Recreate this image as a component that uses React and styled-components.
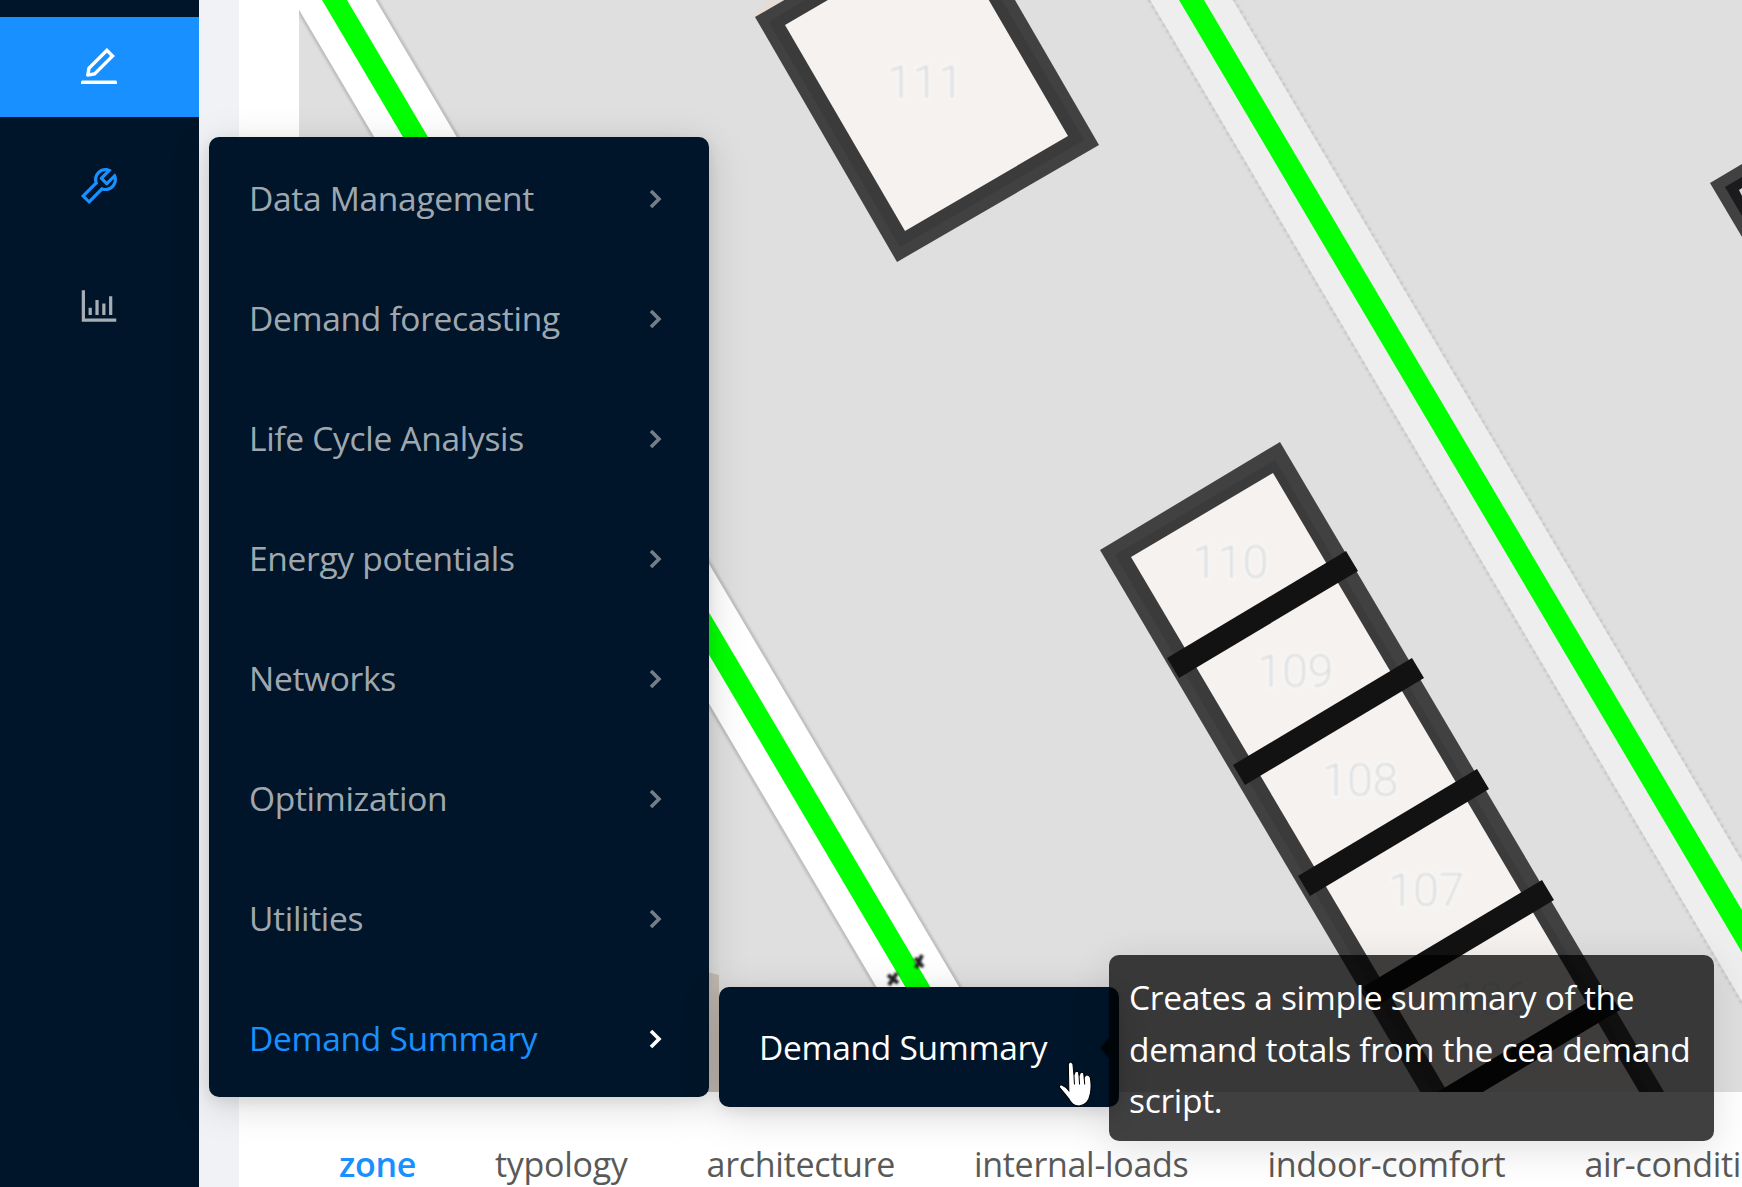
import styled, { createGlobalStyle } from "styled-components";
import { AiOutlineEdit, AiOutlineTool, AiOutlineBarChart } from "react-icons/ai";

const GlobalStyle = createGlobalStyle`
  html, body {
    margin: 0;
    padding: 0;
    height: 100%;
    overflow: hidden;
    background: #f0f2f5;
    font-family: "Open Sans", "Noto Sans", sans-serif;
  }
  #root { height: 100%; }
`;

const Page = styled.div`
  position: relative;
  display: flex;
  height: 100vh;
  overflow: hidden;
`;

const Sidebar = styled.nav`
  flex: 0 0 199px;
  padding-top: 17px;
  background: #001529;
`;

const NavItem = styled.div`
  display: flex;
  align-items: center;
  justify-content: center;
  height: 100px;
  padding: 0 2px 3px 0;
  box-sizing: border-box;
  margin-bottom: 20px;
  background: ${(p) => (p.$active ? "#1890ff" : "transparent")};
  color: ${(p) => p.$color};
`;

const Content = styled.main`
  flex: 1;
  min-width: 0;
  padding-left: 40px;
  background: #f0f2f5;
`;

const Panel = styled.section`
  height: 100%;
  padding-left: 60px;
  background: #fff;
`;

const MapFrame = styled.svg`
  display: block;
  width: 100%;
  height: 1092px;
  background: #dfdfdf;
`;

const Tabs = styled.div`
  display: flex;
  gap: 79px;
  padding: 48px 0 0 40px;
  overflow: hidden;
  white-space: nowrap;
`;

const Tab = styled.span`
  font-size: 34px;
  line-height: 48px;
  letter-spacing: -0.3px;
  font-weight: ${(p) => (p.$active ? 600 : 400)};
  color: ${(p) => (p.$active ? "#1890ff" : "#595959")};
`;

const Flyout = styled.ul`
  position: absolute;
  left: 209px;
  top: 137px;
  display: flex;
  flex-direction: column;
  gap: 8px;
  width: 500px;
  margin: 0;
  padding: 4px 0;
  box-sizing: border-box;
  list-style: none;
  background: #001529;
  border-radius: 10px;
  box-shadow: 0 8px 40px rgba(0, 0, 0, 0.15), 0 4px 14px rgba(0, 0, 0, 0.08);
`;

const FlyoutItem = styled.li`
  display: flex;
  align-items: center;
  justify-content: space-between;
  height: 112px;
  padding: 1px 47px 0 40px;
  box-sizing: border-box;
  font-size: 33.5px;
  letter-spacing: -0.3px;
  color: ${(p) => (p.$active ? "#1890ff" : "rgba(255, 255, 255, 0.65)")};
`;

const Chevron = styled.svg`
  flex: none;
  width: 14px;
  height: 20px;
  margin-top: 2px;
  fill: none;
  stroke: ${(p) => (p.$active ? "#fff" : "rgba(255, 255, 255, 0.45)")};
  stroke-width: 3.6;
`;

const SubMenu = styled.div`
  position: absolute;
  left: 719px;
  top: 987px;
  display: flex;
  align-items: center;
  width: 400px;
  height: 120px;
  padding-left: 40px;
  box-sizing: border-box;
  background: #001529;
  border-radius: 10px;
  color: #fff;
  font-size: 33.5px;
  letter-spacing: -0.3px;
  box-shadow: 0 8px 40px rgba(0, 0, 0, 0.15), 0 4px 14px rgba(0, 0, 0, 0.08);
`;

const Tooltip = styled.div`
  position: absolute;
  left: 1109px;
  top: 955px;
  width: 605px;
  height: 186px;
  padding: 17px 20px;
  box-sizing: border-box;
  background: rgba(0, 0, 0, 0.75);
  border-radius: 10px;
  color: #fff;
  font-size: 33.5px;
  line-height: 51.5px;
  letter-spacing: -0.3px;
  box-shadow: 0 8px 40px rgba(0, 0, 0, 0.12);

  &::before {
    content: "";
    position: absolute;
    left: -9px;
    top: 83px;
    width: 9px;
    height: 20px;
    background: rgba(0, 0, 0, 0.75);
    clip-path: polygon(100% 0, 100% 100%, 0 50%);
  }
`;

const Pointer = styled.svg`
  position: absolute;
  left: 1058px;
  top: 1060px;
  width: 36px;
  height: 47px;
`;

const Casing = styled.line`
  stroke: ${(p) => p.$color};
  stroke-width: ${(p) => p.$width}px;
`;

const Block = styled.polygon`
  fill: ${(p) => p.$fill};
`;

const Label = styled.text`
  font-family: Roboto, "DejaVu Sans", sans-serif;
  font-size: 46px;
  font-weight: 300;
  text-anchor: middle;
  fill: #dcdcdc;
  stroke: #f9f9f9;
  stroke-width: 4px;
  paint-order: stroke;
`;

const menuItems = [
  "Data Management",
  "Demand forecasting",
  "Life Cycle Analysis",
  "Energy potentials",
  "Networks",
  "Optimization",
  "Utilities",
  "Demand Summary",
];

const tabs = ["zone", "typology", "architecture", "internal-loads", "indoor-comfort", "air-conditioning"];

const labels = [
  ["111", 925, 98],
  ["110", 1230, 578],
  ["109", 1295, 687],
  ["108", 1360, 796],
  ["107", 1426, 906],
  ["106", 1491, 1015],
];

// dividers between the row houses, given by their upper-left corner
const dividers = [
  [1167, 658],
  [1233, 765],
  [1298, 876],
  [1363, 987],
  [1429, 1097],
];

const SLOPE = 0.591;

function Road({ x0, casing, edge, dashed }) {
  const y0 = -200;
  const y1 = 1200;
  const ax = x0 + SLOPE * y0;
  const bx = x0 + SLOPE * y1;
  return (
    <g>
      <Casing x1={ax} y1={y0} x2={bx} y2={y1} $color={edge} $width={76} strokeDasharray={dashed ? "4 3" : undefined} filter="url(#soft)" />
      <Casing x1={ax} y1={y0} x2={bx} y2={y1} $color={casing} $width={71} />
      <Casing x1={ax} y1={y0} x2={bx} y2={y1} $color="#00ff00" $width={21.5} />
    </g>
  );
}

function CityMap() {
  return (
    <MapFrame viewBox="299 0 1443 1092" preserveAspectRatio="xMinYMin slice">
      <defs>
        <filter id="soft" filterUnits="userSpaceOnUse" x="299" y="-200" width="1443" height="1400">
          <feGaussianBlur stdDeviation="0.8" />
        </filter>
      </defs>

      <Road x0={334.5} casing="#fff" edge="#bdbdbd" />
      <Road x0={1191.5} casing="#eeeeee" edge="#c4c4c4" dashed />

      <Block $fill="#c9bfb8" points="700,970 719,975 719,1092 700,1092" />
      <Block $fill="#e6dcd4" points="748,20 768,0 800,0" />

      {/* marks on the road */}
      <path d="M888 975l10 8M897 973l-8 12M915 958l8 9M922 955l-6 13" stroke="#222" strokeWidth="4" filter="url(#soft)" />

      {/* building 111 */}
      <Block $fill="#414141" points="755,17 897,262 1099,145 957,-100" />
      <Block $fill="#3b3b3b" points="769,22 900,247 1084,140 950,-88" />
      <Block $fill="#f5f2ef" points="785,25 905,231 1068,136 948,-70" />

      {/* row 110 and on */}
      <Block $fill="#414141" points="1100,550 1280,442 1800,1322 1620,1430" />
      <Block $fill="#3b3b3b" points="1115,555 1275,460 1790,1330 1630,1425" />
      <Block $fill="#f5f2ef" points="1131,557 1273,473 1780,1330 1638,1414" />
      {dividers.map(([x, y]) => (
        <Block key={x} $fill="#121212" points={`${x},${y} ${x + 179},${y - 107} ${x + 191},${y - 87} ${x + 12},${y + 20}`} />
      ))}

      {/* corner of the next building on the right */}
      <Block $fill="#414141" points="1710,183 1742,164 1742,237" />
      <Block $fill="#1b1b1d" points="1725,187 1742,177 1742,216" />
      <Block $fill="#d8d8d8" points="1739,190 1742,188 1742,196" />

      <g filter="url(#soft)">
        {labels.map(([text, x, y]) => (
          <Label key={text} x={x} y={y}>{text}</Label>
        ))}
      </g>
    </MapFrame>
  );
}

export default function App() {
  return (
    <Page>
      <GlobalStyle />
      <Sidebar>
        <NavItem $active $color="#fff"><AiOutlineEdit size={46} /></NavItem>
        <NavItem $color="#1890ff"><AiOutlineTool size={46} /></NavItem>
        <NavItem $color="rgba(255, 255, 255, 0.65)"><AiOutlineBarChart size={46} /></NavItem>
      </Sidebar>

      <Content>
        <Panel>
          <CityMap />
          <Tabs>
            {tabs.map((name, i) => (
              <Tab key={name} $active={i === 0}>{name}</Tab>
            ))}
          </Tabs>
        </Panel>
      </Content>

      <Flyout>
        {menuItems.map((name, i) => {
          const active = i === menuItems.length - 1;
          return (
            <FlyoutItem key={name} $active={active}>
              {name}
              <Chevron viewBox="0 0 14 20" $active={active}>
                <path d="M3 2l8 8-8 8" />
              </Chevron>
            </FlyoutItem>
          );
        })}
      </Flyout>

      <SubMenu>Demand Summary</SubMenu>
      <Tooltip>Creates a simple summary of the demand totals from the cea demand script.</Tooltip>

      <Pointer viewBox="0 0 34 46">
        <path
          d="M9.5 4Q11.5 0 14 4L15 15L16 12Q18 10 19.5 12L20 16L21 13Q23 11 24.5 13L25 17L26.5 15Q29 14 31 17Q32.5 26 31 33Q29 44 20 45Q13 45 10 38Q6 33 1 27Q0 24 3 24.5Q7 26 10 30Z"
          fill="#fff"
          stroke="#000"
          strokeWidth="1"
        />
        <path d="M15 15L15.5 24M20 16L20.5 24M25 17L25.5 24" stroke="#000" strokeWidth="1" fill="none" />
      </Pointer>
    </Page>
  );
}
